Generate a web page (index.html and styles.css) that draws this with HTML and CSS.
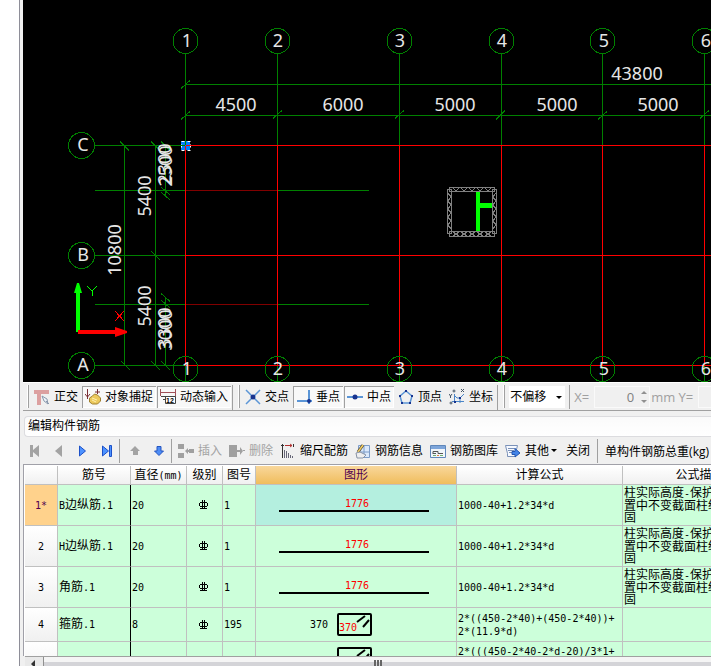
FILE: index.html
```html
<!DOCTYPE html>
<html lang="zh-CN">
<head>
    <meta charset="UTF-8">
    <meta name="viewport" content="width=device-width, initial-scale=1.0">
    <title>编辑构件钢筋</title>
    <link rel="stylesheet" href="styles.css">
</head>
<body>
<main class="app">
    <svg class="drawing" role="img" aria-label="轴网">
        <g transform="translate(-23 0)">
            <!-- 选中点 -->
            <rect class="pick" x="181" y="141" width="9" height="9"/>
            <rect class="pick-edge" x="181.5" y="141.5" width="9" height="9"/>

            <!-- 尺寸线 -->
            <g class="green">
                <path d="M185.5 53V145M277.5 53V145M399.5 53V145M501.5 53V145M602.5 53V145M704.5 53V145"/>
                <path d="M185 84.5H1200M185 115.5H1200"/>
                <path d="M95 145.5H185M95 255.5H185M95 365.5H185M95 190.5H185M277 190.5H369M95 304.5H185M277 304.5H369"/>
                <path d="M124.5 145V365M155.5 145V365M165.5 145V196M165.5 297V365"/>
                <path d="M181 88.5l9-8M181 119.5l9-8M273 118.5l9-8M395 118.5l9-8M496 119.5l9-9M598 119.5l9-8M700 118.5l9-8"/>
                <path d="M120 141.5l9 9M151 141.5l9 9M161 141.5l9 9M161 187l9 8M161 192l9 8M151 251l9 9M161 293.5l9 8M161 300l9 8M121 361l9 9M151 361l9 9M161 361l9 9"/>
                <path d="M185.5 366V382M277.5 366V382M399.5 366V382M501.5 366V382M602.5 366V382M704.5 366V382"/>
            </g>

            <!-- 轴线 -->
            <g class="red">
                <path d="M186 145.5H1200M186 255.5H1200M186 365.5H1200"/>
                <path d="M185.5 146V366M277.5 146V366M399.5 146V366M501.5 146V366M602.5 146V366M704.5 146V366"/>
            </g>
            <path class="dark-red" d="M186 190.5H277M186 304.5H277"/>

            <!-- 轴号 -->
            <g class="green">
                <circle cx="185.5" cy="41" r="12.5"/><circle cx="277.5" cy="41" r="12.5"/>
                <circle cx="399.5" cy="41" r="12.5"/><circle cx="501.5" cy="41" r="12.5"/>
                <circle cx="602.5" cy="41" r="12.5"/><circle cx="704.5" cy="41" r="12.5"/>
                <circle cx="185.5" cy="369" r="12.5"/><circle cx="277.5" cy="369" r="12.5"/>
                <circle cx="399.5" cy="369" r="12.5"/><circle cx="501.5" cy="369" r="12.5"/>
                <circle cx="602.5" cy="369" r="12.5"/><circle cx="704.5" cy="369" r="12.5"/>
                <circle cx="81.5" cy="145.5" r="13"/><circle cx="81.5" cy="255.5" r="13"/><circle cx="81.5" cy="365.5" r="13"/>
            </g>
            <g class="label">
                <text x="187" y="47">1</text><text x="278" y="47">2</text><text x="400" y="47">3</text>
                <text x="502" y="47">4</text><text x="604" y="47">5</text><text x="706" y="47">6</text>
                <text x="187" y="375">1</text><text x="278" y="375">2</text><text x="400" y="375">3</text>
                <text x="502" y="375">4</text><text x="604" y="375">5</text><text x="706" y="375">6</text>
                <text x="83" y="151">C</text><text x="83" y="261">B</text><text x="83" y="371">A</text>
                <text x="637" y="80">43800</text>
                <text x="236" y="111">4500</text><text x="343" y="111">6000</text><text x="455" y="111">5000</text>
                <text x="557" y="111">5000</text><text x="658" y="111">5000</text>
                <text transform="translate(121 250) rotate(-90)">10800</text>
                <text transform="translate(151 196) rotate(-90)">5400</text>
                <text transform="translate(151 306) rotate(-90)">5400</text>
                <text transform="translate(171 164) rotate(-90)">2300</text>
                <text transform="translate(172 166) rotate(-90)">2500</text>
                <text transform="translate(171 328) rotate(-90)">3300</text>
                <text transform="translate(172 330) rotate(-90)">3000</text>
            </g>

            <!-- 柱截面 -->
            <g class="hatch">
                <rect x="449.5" y="187.5" width="45" height="4"/>
                <rect x="449.5" y="231.5" width="45" height="5"/>
                <rect x="447.5" y="189.5" width="4" height="44"/>
                <rect x="492.5" y="189.5" width="4" height="44"/>
                <path d="M453 188l3 3 3-3M461 188l3 3 3-3M469 188l3 3 3-3M477 188l3 3 3-3M485 188l3 3 3-3"/>
                <path d="M453 232l6 4M459 232l-6 4M461 232l6 4M467 232l-6 4M469 232l6 4M475 232l-6 4M477 232l6 4M483 232l-6 4M485 232l6 4M491 232l-6 4"/>
                <path d="M448 193l3 4-3 4 3 4-3 4 3 4-3 4 3 4-3 4 3 4M496 193l-3 4 3 4-3 4 3 4-3 4 3 4-3 4 3 4-3 4"/>
            </g>
            <path class="fill-green" d="M476 192h4v11h12v5h-12v23h-4z"/>

            <!-- 坐标轴 -->
            <path class="fill-green" d="M76 332V293h-2l3-10h2l3 10h-2v39z"/>
            <path class="axis-y" d="M87 286l5 5 5-5M92.500 291v5"/>
            <path class="fill-red" d="M78 330h37v-3l12 4v2l-12 4v-3H78z"/>
            <path class="red" d="M115 311l9 10M124 311l-9 10"/>
        </g>
    </svg>

    <div class="snap-bar">
        <div class="group">
            <button class="tool" type="button">
                <svg class="icon" viewBox="0 0 16 16"><path fill="#dca0a0" d="M0 1h15v4H7v11H3V5H0z"/><path fill="#eef2f7" stroke="#8a99ad" d="M8 7l5 3 1 5-4-3z"/><path stroke="#8a99ad" d="M12 12l3 3"/></svg>正交</button>
            <button class="tool pressed" type="button">
                <svg class="icon" viewBox="0 0 16 16"><path stroke="#7a2f35" d="M2.500 0v10M12.500 0v5M0 5l2.500 3L5 5M10 3h5"/><path fill="#ecc95c" stroke="#a08030" d="M4.500 9l3-2 2-2 3 1 3 3v3l-3 3h-5l-3-2z"/><path stroke="#fff0b0" d="M7 9l5 2M7 11l4 2"/></svg>对象捕捉</button>
            <button class="tool pressed" type="button">
                <svg class="icon" viewBox="0 0 16 16"><path stroke="#a05058" d="M.5 0v7M15.500 0v7M1 3.500h15"/><path stroke="#444" fill="#fff" d="M1 7.500h14.500M5.500 7.500h10v7h-10zM3 10.500h2"/><text x="6" y="14" font-size="7" font-weight="bold" font-family="Liberation Sans, sans-serif" fill="#000">12</text></svg>动态输入</button>
        </div>
        <div class="group">
            <button class="tool" type="button">
                <svg class="icon" viewBox="0 0 16 16"><path stroke="#5b95d6" stroke-width="1.500" d="M1 1l14 14M15 1L1 15"/><circle cx="8" cy="8" r="2.500" fill="#17338f"/></svg>交点</button>
            <button class="tool pressed" type="button">
                <svg class="icon" viewBox="0 0 16 16"><path stroke="#5b95d6" stroke-width="2" d="M1 12h15M13 1v14"/><circle cx="13" cy="12" r="2" fill="#17338f"/></svg>垂点</button>
            <button class="tool pressed" type="button">
                <svg class="icon" viewBox="0 0 16 16"><path stroke="#5b95d6" stroke-width="2" d="M0 8h16"/><circle cx="8" cy="8" r="2.500" fill="#17338f"/></svg>中点</button>
            <button class="tool" type="button">
                <svg class="icon" viewBox="0 0 16 16"><path stroke="#5b95d6" stroke-width="1.500" d="M8 2l6 5-2 7H4L2 7z"/><path fill="#17338f" d="M7 1h2v2H7zM1 6h2v2H1zM13 6h2v2h-2zM3 13h2v2H3zM11 13h2v2h-2z"/></svg>顶点</button>
            <button class="tool" type="button">
                <svg class="icon" viewBox="0 0 16 16"><path stroke="#456" d="M0 5l1.500 2L3 5M1.500 7v2M12 0l3 3M15 0l-3 3"/><circle cx="5" cy="2" r="1" stroke="#456"/><circle cx="2" cy="14" r="1" stroke="#456"/><path stroke="#4b86c8" d="M5.500 5v9M3 12.500h12M5 6l3 3h3l4-4M11 9v5"/><path fill="#17338f" d="M10 8h2v2h-2zM5 12h2v2H5z"/></svg>坐标</button>
        </div>
        <div class="group last">
            <span class="combo">
                <select class="offset-mode" aria-label="偏移方式"><option>不偏移</option></select>
                <span class="caret"></span>
            </span>
            <span class="rule"></span>
            <label class="coord" for="offset-x">X=</label>
            <span class="spin">
                <input id="offset-x" class="spin-input" type="text" value="0" disabled>
                <span class="spin-arrows"><i class="up"></i><i class="down"></i></span>
            </span>
            <label class="coord unit" for="offset-y">mm Y=</label>
            <span class="spin">
                <input id="offset-y" class="spin-input" type="text" value="0" disabled>
                <span class="spin-arrows"><i class="up"></i><i class="down"></i></span>
            </span>
        </div>
    </div>

    <h1 class="panel-title">编辑构件钢筋</h1>

    <div class="edit-bar">
        <button class="nav" type="button" aria-label="第一条"><svg class="icon" viewBox="0 0 16 16"><path fill="#a3a3a3" d="M3 2h3v5l6-5v12L6 9v5H3z"/></svg></button>
        <button class="nav" type="button" aria-label="上一条"><svg class="icon" viewBox="0 0 16 16"><path fill="#a3a3a3" d="M11 2v12L4 8z"/></svg></button>
        <button class="nav" type="button" aria-label="下一条"><svg class="icon" viewBox="0 0 16 16"><path fill="#4d92ff" stroke="#1c50c8" d="M4.500 3l6 5-6 5z"/></svg></button>
        <button class="nav" type="button" aria-label="最后一条"><svg class="icon" viewBox="0 0 16 16"><path fill="#4d92ff" stroke="#1c50c8" d="M3.500 3l6 5-6 5zM10.500 2.500h2v11h-2z"/></svg></button>
        <span class="rule"></span>
        <button class="nav" type="button" aria-label="上移"><svg class="icon" viewBox="0 0 16 16"><path fill="#a3a3a3" d="M8 3l5 5h-2v4H6V8H3z"/></svg></button>
        <button class="nav" type="button" aria-label="下移"><svg class="icon" viewBox="0 0 16 16"><path fill="#4d8cf5" stroke="#2454c0" d="M6 3.500h4V8h2.500L8 12.500 3.500 8H6z"/></svg></button>
        <span class="rule"></span>
        <button class="tool" type="button" disabled>
            <svg class="icon" viewBox="0 0 16 16"><path fill="#a0a0a0" d="M0 1h6v5H0zM0 10h6v5H0zM11 6h5v4h-5zM7 8l3-3v2h2v2h-2v2z"/></svg>插入</button>
        <button class="tool" type="button" disabled>
            <svg class="icon" viewBox="0 0 16 16"><path fill="#a0a0a0" d="M0 2h8v12H0zM8 7h3V4l3 4-3 4V9H8zM14 7h2v1h-2z"/></svg>删除</button>
        <button class="tool" type="button">
            <svg class="icon" viewBox="0 0 16 16"><path stroke="#333" d="M2.500 1v14M1 2.500h3M13.500 1v3"/><path stroke="#b03030" d="M5 2.500h7M10 1l2 1.500L10 4"/><path stroke="#667" d="M4.500 7v8M6.500 8v7M8.500 10v5M10.500 12v3M12.500 13v2"/></svg>缩尺配筋</button>
        <button class="tool" type="button">
            <svg class="icon" viewBox="0 0 16 16"><path fill="#dbe9fb" stroke="#7d9cc8" d="M3.500 2.500h11v12h-11z"/><path stroke="#7d9cc8" d="M9 3v11M4 9h10"/><path stroke="#4d4636" stroke-width="3" d="M8 2L3 9"/><path stroke="#f4cf62" stroke-width="1.500" d="M8 2L3 9"/><path fill="#eee" stroke="#8893a5" d="M1 10l4-1 6 3-3 3H2z"/></svg>钢筋信息</button>
        <button class="tool" type="button">
            <svg class="icon" viewBox="0 0 16 16"><path fill="#f1f5fa" stroke="#5f87ba" d="M.5 2.500h15v12H.5z"/><path fill="#7da5da" d="M1 3h14v3H1z"/><path stroke="#555" d="M3 11V8.500h5v2h5M3 10.500h3"/><path stroke="#70b070" d="M3 12.500h3M10 12.500h3"/><path stroke="#e08040" d="M7 12.500h2"/></svg>钢筋图库</button>
        <button class="tool" type="button">
            <svg class="icon" viewBox="0 0 16 16"><path fill="#f6f9ff" stroke="#7a91b8" d="M.5 2.500h12l-2 8v3h-8v-3z"/><path stroke="#7a91b8" d="M3 5.500h7M3 7.500h6M4 9.500h4"/><path fill="#4384e8" stroke="#2456b0" d="M7 8.500h3V5.500l5 4.500-5 4v-2.500H7z"/></svg>其他<span class="caret small"></span></button>
        <button class="tool" type="button">关闭</button>
        <span class="rule"></span>
        <span class="total">单构件钢筋总重(kg)</span>
    </div>

    <div class="sheet">
        <table class="rebar">
            <colgroup>
                <col class="c-no"><col class="c-name"><col class="c-dia"><col class="c-grade"><col class="c-fig"><col class="c-shape"><col class="c-formula"><col class="c-desc">
            </colgroup>
            <thead>
                <tr>
                    <th></th><th>筋号</th><th>直径<span class="n">(mm)</span></th><th>级别</th><th>图号</th><th class="current">图形</th><th>计算公式</th><th>公式描述</th>
                </tr>
            </thead>
            <tbody>
                <tr>
                    <th class="current"><span class="n">1*</span></th>
                    <td class="name"><span class="n">B</span>边纵筋<span class="n">.1</span></td>
                    <td><span class="n">20</span></td>
                    <td><svg class="grade" viewBox="0 0 9 10"><path d="M1 2.500h7M1 6.500h7M.5 3v3M8.500 3v3M3.500 0v9M5.500 0v9M1 8.500h7"/></svg></td>
                    <td><span class="n">1</span></td>
                    <td class="picked"><span class="bar n">1776</span></td>
                    <td><span class="n">1000-40+1.2*34*d</span></td>
                    <td>柱实际高度<span class="n">-</span>保护层<span class="n">+</span>设<br>置中不变截面柱纵筋锚<br>固</td>
                </tr>
                <tr>
                    <th><span class="n">2</span></th>
                    <td class="name"><span class="n">H</span>边纵筋<span class="n">.1</span></td>
                    <td><span class="n">20</span></td>
                    <td><svg class="grade" viewBox="0 0 9 10"><path d="M1 2.500h7M1 6.500h7M.5 3v3M8.500 3v3M3.500 0v9M5.500 0v9M1 8.500h7"/></svg></td>
                    <td><span class="n">1</span></td>
                    <td><span class="bar n">1776</span></td>
                    <td><span class="n">1000-40+1.2*34*d</span></td>
                    <td>柱实际高度<span class="n">-</span>保护层<span class="n">+</span>设<br>置中不变截面柱纵筋锚<br>固</td>
                </tr>
                <tr>
                    <th><span class="n">3</span></th>
                    <td class="name">角筋<span class="n">.1</span></td>
                    <td><span class="n">20</span></td>
                    <td><svg class="grade" viewBox="0 0 9 10"><path d="M1 2.500h7M1 6.500h7M.5 3v3M8.500 3v3M3.500 0v9M5.500 0v9M1 8.500h7"/></svg></td>
                    <td><span class="n">1</span></td>
                    <td><span class="bar n">1776</span></td>
                    <td><span class="n">1000-40+1.2*34*d</span></td>
                    <td>柱实际高度<span class="n">-</span>保护层<span class="n">+</span>设<br>置中不变截面柱纵筋锚<br>固</td>
                </tr>
                <tr class="short">
                    <th><span class="n">4</span></th>
                    <td class="name">箍筋<span class="n">.1</span></td>
                    <td><span class="n">8</span></td>
                    <td><svg class="grade" viewBox="0 0 9 10"><path d="M1 2.500h7M1 6.500h7M.5 3v3M8.500 3v3M3.500 0v9M5.500 0v9M1 8.500h7"/></svg></td>
                    <td><span class="n">195</span></td>
                    <td>
                        <div class="stirrup">
                            <span class="n">370</span>
                            <span class="hoop"><span class="n">370</span><svg class="hook" viewBox="0 0 14 13"><path d="M1 7l8-6M7 12l6-7"/></svg></span>
                        </div>
                    </td>
                    <td><span class="n">2*((450-2*40)+(450-2*40))+<br>2*(11.9*d)</span></td>
                    <td></td>
                </tr>
                <tr class="short">
                    <th></th>
                    <td class="name"></td>
                    <td></td>
                    <td></td>
                    <td></td>
                    <td>
                        <div class="stirrup">
                            <span class="n"></span>
                            <span class="hoop"><svg class="hook" viewBox="0 0 14 13"><path d="M1 7l8-6M7 12l6-7"/></svg></span>
                        </div>
                    </td>
                    <td class="tall"><span class="n">2*(((450-2*40-2*d-20)/3*1+</span></td>
                    <td></td>
                </tr>
            </tbody>
        </table>
    </div>
    <div class="scroll">
        <span class="scroll-arrow"></span>
        <span class="scroll-thumb"><span class="grip"></span></span>
    </div>
</main>
</body>
</html>
```
FILE: styles.css
```css
*, *::before {
    box-sizing: border-box;
}
body {
    margin: 0;
    padding-left: 19px;
    background-color: #fff;
    color: #000;
    font-family: "Open Sans", "Noto Sans CJK SC", sans-serif;
    font-size: 12px;
    overflow: hidden;
}
button, input, select {
    font: inherit;
    color: inherit;
}
.app {
    display: flex;
    flex-direction: column;
    height: 100vh;
    padding-left: 3px;
    border-left: 1px solid #8e8e98;
    background-color: #f0f0f0;
}

/* 绘图区 */
.drawing {
    display: block;
    flex: none;
    width: 100%;
    height: 382px;
    background-color: #000;
}
.drawing .green, .drawing .red, .dark-red, .hatch, .axis-y {
    fill: none;
    shape-rendering: crispEdges;
}
.drawing .green {
    stroke: #008000;
}
.drawing .red {
    stroke: #f00;
}
.dark-red {
    stroke: #800000;
}
.hatch {
    stroke: #808080;
}
.axis-y {
    stroke: #0f0;
}
.fill-green {
    fill: #0f0;
}
.fill-red {
    fill: #f00;
}
.pick {
    fill: #0080ff;
}
.pick-edge {
    fill: none;
    stroke: #fff;
    stroke-dasharray: 3 3;
}
.label text {
    fill: #e6e6e6;
    font-family: "Noto Sans", sans-serif;
    font-size: 18px;
    text-anchor: middle;
}

/* 捕捉工具栏 */
.snap-bar {
    display: flex;
    flex: none;
    gap: 1px;
    height: 29px;
    padding-top: 2px;
    border-top: 1px solid #fff;
    border-bottom: 1px solid #a0a0a0;
    overflow: hidden;
}
.group {
    display: flex;
    flex: none;
    align-items: center;
    gap: 1px;
    padding: 0 1px 2px 4px;
    border-right: 1px solid #a0a0a0;
}
.group::before {
    content: "";
    align-self: stretch;
    width: 2px;
    margin-right: 1px;
    border-left: 1px solid #fff;
    border-right: 1px solid #a0a0a0;
}
.group.last {
    border-right: 0;
}
.tool {
    display: flex;
    flex: none;
    align-items: center;
    gap: 4px;
    height: 22px;
    padding: 0 3px;
    border: 0;
    background: none;
    line-height: 20px;
    white-space: nowrap;
}
.tool:disabled {
    color: #a3a3a3;
}
.tool.pressed {
    background-color: #f8f8f8;
    box-shadow: inset 1px 1px #a0a0a0, inset -1px -1px #fff;
}
.icon {
    flex: none;
    width: 16px;
    height: 16px;
    fill: none;
}
.rule {
    flex: none;
    width: 1px;
    height: 24px;
    margin: 0 3px;
    background-color: #a0a0a0;
}
.combo {
    position: relative;
    margin-left: 2px;
}
.offset-mode {
    display: block;
    width: 56px;
    height: 22px;
    padding: 0 1px;
    border: 0;
    border-radius: 0;
    background-color: #fff;
    appearance: none;
}
.caret {
    width: 0;
    border: 3px solid transparent;
    border-top-color: #000;
    border-bottom: 0;
}
.combo .caret {
    position: absolute;
    top: 10px;
    right: 3px;
}
.caret.small {
    margin: 0 2px 0 -2px;
}
.coord {
    width: 19px;
    color: #a0a0a0;
    font-size: 13px;
    white-space: nowrap;
}
.coord.unit {
    width: 46px;
}
.spin {
    display: flex;
    width: 56px;
    height: 22px;
    border: 1px solid #fafafa;
}
.spin-input {
    width: 39px;
    padding: 0;
    border: 0;
    background: none;
    color: #808080;
    font-size: 13px;
    text-align: right;
}
.spin-arrows {
    display: flex;
    flex-direction: column;
    justify-content: space-between;
    padding: 4px 0 4px 7px;
}
.up, .down {
    border: 3px solid transparent;
}
.up {
    border-top: 0;
    border-bottom-color: #909090;
}
.down {
    border-bottom: 0;
    border-top-color: #909090;
}

/* 标题和编辑工具栏 */
.panel-title {
    flex: none;
    height: 21px;
    margin: 5px 0 0 1px;
    padding-left: 3px;
    border: 1px solid #dcdcdf;
    border-right: 0;
    border-radius: 4px 0 0 4px;
    background: linear-gradient(#fafafa, #fff);
    font-size: 12px;
    font-weight: normal;
    line-height: 18px;
}
.edit-bar {
    display: flex;
    flex: none;
    align-items: center;
    gap: 1px;
    height: 27px;
    overflow: hidden;
}
.edit-bar .rule {
    margin: 0 2px 0 0;
}
.edit-bar .tool + .rule {
    margin-left: 3px;
}
.nav {
    flex: none;
    width: 23px;
    height: 22px;
    padding: 0;
    border: 0;
    background: none;
}
.nav .icon {
    display: block;
    margin: 0 auto;
}
.total {
    flex: none;
    margin-left: 4px;
    white-space: nowrap;
}

/* 钢筋表 */
.sheet {
    flex: 1 1 0;
    min-height: 0;
    padding: 1px 0 0 1px;
    border-top: 1px solid #a0a0a8;
    border-left: 1px solid #a0a0a8;
    background-color: #fff;
    overflow: hidden;
}
.rebar {
    width: 752px;
    border-spacing: 0;
    table-layout: fixed;
    line-height: 12px;
}
.c-no, .c-fig { width: 33px; }
.c-name { width: 73px; }
.c-dia { width: 56px; }
.c-grade { width: 36px; }
.c-shape { width: 201px; }
.c-formula { width: 166px; }
.c-desc { width: 154px; }
.rebar th, .rebar td {
    height: 41px;
    padding: 0 2px 0 1px;
    border-right: 1px solid #c0c0c0;
    border-bottom: 1px solid #c0c0c0;
    text-align: left;
    white-space: nowrap;
}
.rebar th {
    padding: 0;
    background: linear-gradient(#fff, #f0f0f0);
    font-weight: normal;
    text-align: center;
}
.rebar thead th {
    height: 19px;
}
.rebar .short th, .rebar .short td {
    height: 34px;
}
.rebar td {
    background-color: #ccffda;
}
.rebar .name {
    border-right-color: #000;
}
.rebar .picked {
    background-color: #b4efdf;
}
.rebar .tall {
    padding-top: 3px;
    vertical-align: top;
}
.rebar thead .current {
    background: linear-gradient(#f9d79b, #f0bd5c);
    color: #500050;
}
.rebar tbody .current {
    background: #ffd28c;
    color: #500050;
}
.n {
    font-family: "DejaVu Sans Mono", monospace;
    font-size: 10px;
}
.grade {
    display: block;
    width: 9px;
    height: 10px;
    margin-left: 11px;
    fill: none;
    stroke: #000;
    shape-rendering: crispEdges;
}
.bar {
    display: block;
    width: 150px;
    margin: 0 0 1px 22px;
    padding-left: 6px;
    border-bottom: 2px solid #000;
    color: #f00;
    text-align: center;
}
.stirrup {
    display: flex;
    align-items: center;
    padding-left: 53px;
}
.stirrup > .n {
    width: 27px;
}
.hoop {
    position: relative;
    width: 35px;
    height: 23px;
    padding-top: 7px;
    border: 2px solid #000;
    border-radius: 2px;
    color: #f00;
}
.hoop .n {
    display: block;
}
.hook {
    position: absolute;
    top: 0;
    right: 0;
    width: 14px;
    height: 13px;
    fill: none;
    stroke: #000;
    stroke-width: 2;
}

/* 滚动条 */
.scroll {
    display: flex;
    flex: none;
    height: 10px;
    margin-left: 2px;
    border-top: 1px solid #a0a0a0;
    background-color: #e9e9e9;
}
.scroll-arrow {
    width: 4px;
    margin: 3px 8px 0 6px;
    border: 4px solid transparent;
    border-right-color: #333;
    border-left: 0;
}
.scroll-thumb {
    flex: 1;
    border-left: 1px solid #909090;
    background: linear-gradient(#f5f5f5 60%, #d4d4d8 60%);
}
.grip {
    display: block;
    width: 8px;
    height: 6px;
    margin: 3px auto 0;
    background: repeating-linear-gradient(90deg, #666 0 2px, transparent 2px 3px);
}
```
